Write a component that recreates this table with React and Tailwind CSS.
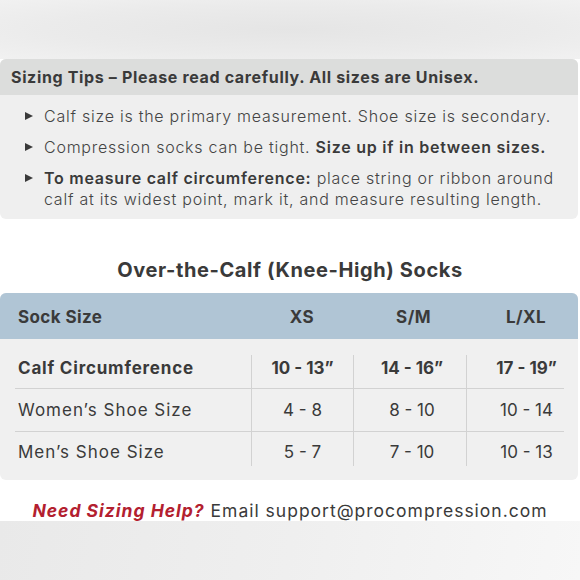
import React from 'react';

const font = { fontFamily: 'Inter, "Open Sans", sans-serif' };

function Bullet({ children }) {
    return (
        <li className="flex items-start">
            <span className="w-[44px] shrink-0 flex justify-end pr-[11px] pt-[6px]">
                <span className="w-0 h-0 border-y-[4.5px] border-y-transparent border-l-[8px] border-l-[#3a3a3a]" />
            </span>
            <span className="flex-1">{children}</span>
        </li>
    );
}

const rows = [
    { label: 'Calf Circumference', bold: true, values: ['10 - 13”', '14 - 16”', '17 - 19”'], h: 'h-[33px] pt-[3px]' },
    { label: 'Women’s Shoe Size', values: ['4 - 8', '8 - 10', '10 - 14'], h: 'h-[42px] pt-[11px]' },
    { label: 'Men’s Shoe Size', values: ['5 - 7', '7 - 10', '10 - 13'], h: 'h-[34px] pt-[10px]' },
];

export default function App() {
    return (
        <div style={font} className="w-[580px] h-[580px] bg-white flex flex-col overflow-hidden text-[#3a3a3a]">
            {/* top band */}
            <div className="h-[59px] shrink-0 bg-[radial-gradient(ellipse_at_center,#e5e5e5_0%,#ebebeb_60%,#f1f1f1_100%)]" />

            {/* sizing tips */}
            <div className="w-[578px] rounded-[6px] overflow-hidden bg-[#efefef] shrink-0">
                <div className="h-[36px] bg-[#dcdddc] flex items-center pl-[11px] text-[16px] font-bold tracking-[0.65px]">
                    Sizing Tips – Please read carefully. All sizes are Unisex.
                </div>
                <ul className="pt-[11px] pb-[9px] flex flex-col gap-[10px] text-[16px] leading-[21px] font-light tracking-[0.75px] text-[#444]">
                    <Bullet>Calf size is the primary measurement. Shoe size is secondary.</Bullet>
                    <Bullet>
                        Compression socks can be tight.{' '}
                        <span className="font-semibold text-[#3a3a3a]">Size up if in between sizes.</span>
                    </Bullet>
                    <Bullet>
                        <span className="font-semibold text-[#3a3a3a]">To measure calf circumference:</span> place string or ribbon around
                        <br />
                        calf at its widest point, mark it, and measure resulting length.
                    </Bullet>
                </ul>
            </div>

            <h2 className="mt-[39px] h-[24px] leading-[24px] text-center text-[20px] font-bold tracking-[0.6px] shrink-0">
                Over-the-Calf (Knee-High) Socks
            </h2>

            {/* table */}
            <div className="mt-[11px] w-[578px] rounded-[6px] overflow-hidden bg-[#f0f0f0] shrink-0">
                <div className="h-[46px] pt-[3px] bg-[#b0c5d5] grid grid-cols-[251px_102px_113px_112px] items-center text-[17px] font-bold tracking-[0.4px]">
                    <div className="pl-[18px]">Sock Size</div>
                    <div className="text-center">XS</div>
                    <div className="text-center pl-[8px]">S/M</div>
                    <div className="text-center pl-[8px]">L/XL</div>
                </div>
                <div className="pt-[16px] pb-[14px] text-[17px] leading-[20px]">
                    {rows.map((r, i) => (
                        <React.Fragment key={r.label}>
                            {i > 0 && <div className="ml-[15px] w-[549px] h-px bg-[#d2d2d2]" />}
                            <div className="grid grid-cols-[251px_102px_113px_112px]">
                                <div className={`pl-[18px] ${r.h} ${r.bold ? 'font-bold tracking-[0.8px]' : 'tracking-[1px]'}`}>{r.label}</div>
                                {r.values.map((v, j) => (
                                    <div
                                        key={j}
                                        className={`border-l border-[#d2d2d2] text-center ${r.h} ${r.bold ? 'font-bold' : ''} ${j === 1 ? 'pl-[4px]' : ''} ${j === 2 ? 'pl-[8px]' : ''}`}
                                    >
                                        {v}
                                    </div>
                                ))}
                            </div>
                        </React.Fragment>
                    ))}
                </div>
            </div>

            <p className="mt-[21px] h-[20px] leading-[20px] text-center text-[17.5px] tracking-[1px] shrink-0 whitespace-nowrap">
                <span className="font-bold italic text-[#b3202f]">Need Sizing Help?</span> Email support@procompression.com
            </p>

            {/* bottom band */}
            <div className="flex-1 bg-[linear-gradient(100deg,#e9e9e9_0%,#efefef_50%,#f7f7f7_100%)]" />
        </div>
    );
}
